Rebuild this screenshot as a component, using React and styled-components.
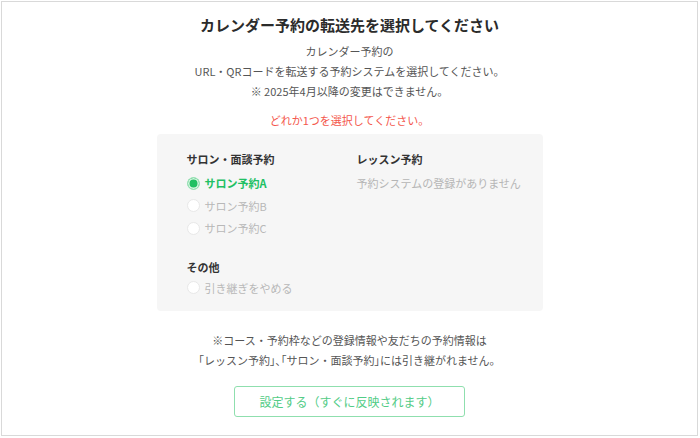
import React from "react";
import styled, { createGlobalStyle } from "styled-components";

const Global = createGlobalStyle`
  html, body { margin: 0; padding: 0; background: #fff; }
  body { font-family: "Noto Sans CJK JP", "Noto Sans", sans-serif; }
  * { box-sizing: border-box; }
`;

const Frame = styled.div`
  margin: 1px;
  width: 697px;
  height: 435px;
  border: 1px solid #d9d9d9;
  display: flex;
  flex-direction: column;
  align-items: center;
  padding-top: 13px;
`;

const Title = styled.h1`
  margin: 0;
  font-size: 15px;
  font-weight: 700;
  line-height: 20px;
  color: #2b2b2b;
`;

const Lead = styled.p`
  margin: 6px 0 0;
  font-size: 11px;
  line-height: 20px;
  color: #555;
  text-align: center;
`;

const Alert = styled.p`
  margin: 9px 0 0;
  font-size: 11px;
  line-height: 20px;
  color: #f4574c;
`;

const Panel = styled.div`
  margin-top: 4px;
  width: 386px;
  background: #f6f6f6;
  border-radius: 4px;
  padding: 15px 20px 12px 30px;
  display: grid;
  grid-template-columns: 170px 1fr;
`;

const Column = styled.div`
  display: flex;
  flex-direction: column;
`;

const Heading = styled.div`
  font-size: 11px;
  font-weight: 700;
  line-height: 20px;
  color: #333;
  margin-top: ${(p) => p.$gap || 0}px;
  margin-bottom: ${(p) => (p.$gap ? 0 : 3)}px;
`;

const Row = styled.label`
  display: flex;
  align-items: center;
  gap: 5px;
  height: 22.5px;
  font-size: 11px;
  color: ${(p) => (p.$checked ? "#21c063" : "#b8b8b8")};
  font-weight: ${(p) => (p.$checked ? 700 : 400)};
`;

const Dot = styled.span`
  width: 13px;
  height: 13px;
  border-radius: 50%;
  flex: none;
  background: ${(p) => (p.$checked ? "#1fc062" : "#fff")};
  border: 1px solid ${(p) => (p.$checked ? "#9fe3b9" : "#e8e8e8")};
  box-shadow: ${(p) => (p.$checked ? "inset 0 0 0 1.5px #d8f5e3" : "none")};
`;

const Empty = styled.div`
  font-size: 11px;
  line-height: 22px;
  color: #b5b5b5;
`;

const Note = styled.p`
  margin: 20px 0 0;
  font-size: 11px;
  line-height: 19.5px;
  color: #555;
  text-align: center;
`;

const Bracket = styled.span`
  font-feature-settings: "palt";
`;

const Submit = styled.button`
  margin-top: 16px;
  width: 231px;
  height: 31px;
  border: 1.5px solid #8fdfae;
  border-radius: 3px;
  background: #fff;
  color: #52cc86;
  font-family: inherit;
  font-size: 12px;
  cursor: pointer;
`;

const Radio = ({ checked, children }) => (
  <Row $checked={checked}>
    <Dot $checked={checked} />
    {children}
  </Row>
);

export default function App() {
  return (
    <>
      <Global />
      <Frame>
        <Title>カレンダー予約の転送先を選択してください</Title>
        <Lead>
          カレンダー予約の
          <br />
          URL・QRコードを転送する予約システムを選択してください。
          <br />※ 2025年4月以降の変更はできません。
        </Lead>
        <Alert>どれか1つを選択してください。</Alert>
        <Panel>
          <Column>
            <Heading>サロン・面談予約</Heading>
            <Radio checked>サロン予約A</Radio>
            <Radio>サロン予約B</Radio>
            <Radio>サロン予約C</Radio>
            <Heading $gap={17}>その他</Heading>
            <Radio>引き継ぎをやめる</Radio>
          </Column>
          <Column>
            <Heading>レッスン予約</Heading>
            <Empty>予約システムの登録がありません</Empty>
          </Column>
        </Panel>
        <Note>
          ※コース・予約枠などの登録情報や友だちの予約情報は
          <br />
          <Bracket>「</Bracket>レッスン予約<Bracket>」、「</Bracket>サロン・面談予約<Bracket>」</Bracket>には引き継がれません。
        </Note>
        <Submit>設定する（すぐに反映されます）</Submit>
      </Frame>
    </>
  );
}
